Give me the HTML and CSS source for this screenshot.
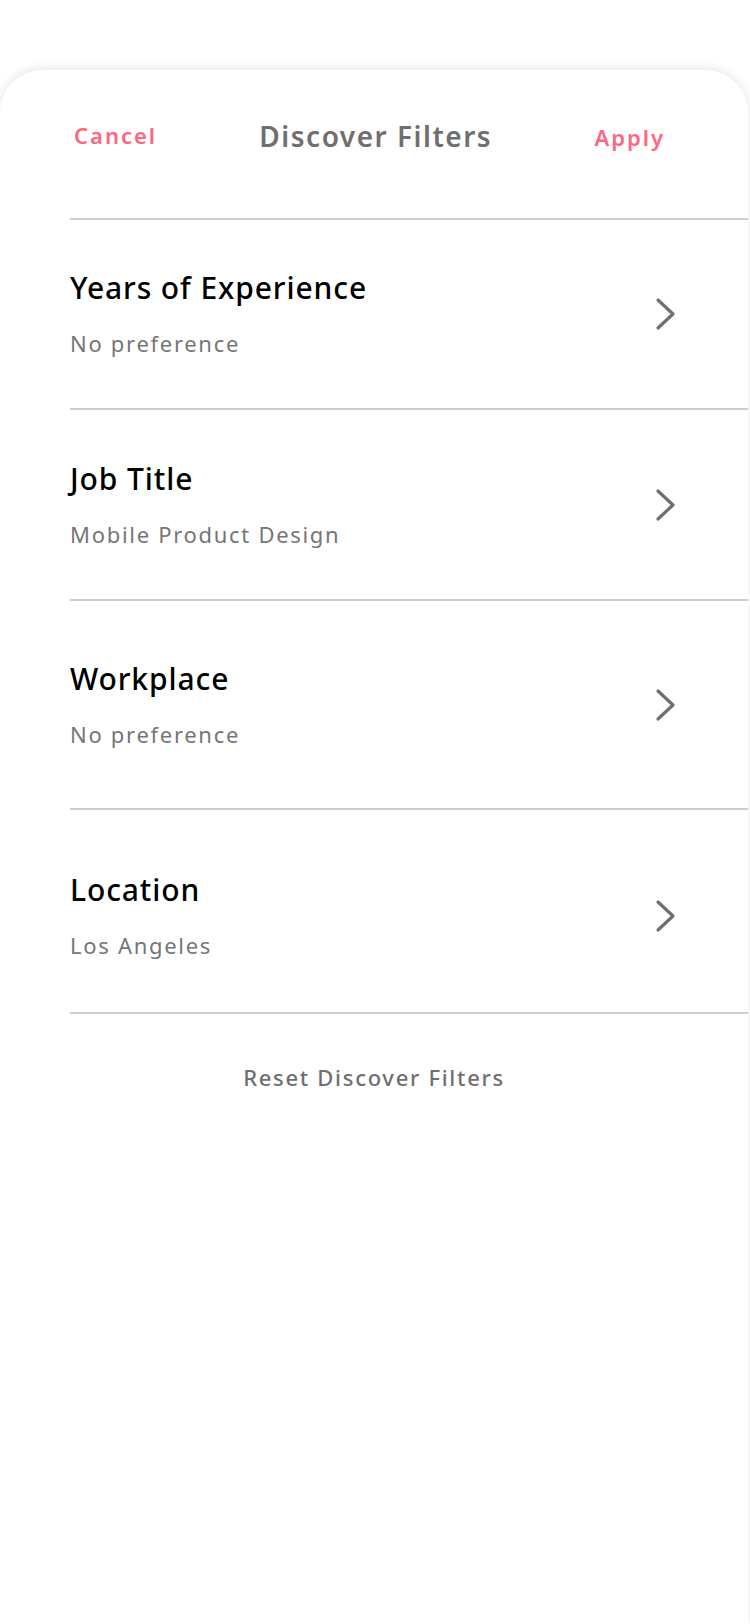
FILE: index.html
```html
<!DOCTYPE html>
<html lang="en">
<head>
    <meta charset="UTF-8">
    <meta name="viewport" content="width=device-width, initial-scale=1.0">
    <title>Discover Filters</title>
    <link rel="stylesheet" href="styles.css">
</head>
<body>
    <div class="sheet">
        <header class="sheet-header">
            <button class="link-btn cancel">Cancel</button>
            <h2 class="sheet-title">Discover Filters</h2>
            <button class="link-btn apply">Apply</button>
        </header>

        <ul class="filter-list">
            <li class="filter-row row-1">
                <div class="filter-text">
                    <h3>Years of Experience</h3>
                    <p>No preference</p>
                </div>
                <svg class="chevron" width="22" height="34" viewBox="0 0 22 34"><path d="M3 3 L18 17 L3 31"/></svg>
            </li>
            <li class="filter-row row-2">
                <div class="filter-text">
                    <h3>Job Title</h3>
                    <p>Mobile Product Design</p>
                </div>
                <svg class="chevron" width="22" height="34" viewBox="0 0 22 34"><path d="M3 3 L18 17 L3 31"/></svg>
            </li>
            <li class="filter-row row-3">
                <div class="filter-text">
                    <h3>Workplace</h3>
                    <p>No preference</p>
                </div>
                <svg class="chevron" width="22" height="34" viewBox="0 0 22 34"><path d="M3 3 L18 17 L3 31"/></svg>
            </li>
            <li class="filter-row row-4">
                <div class="filter-text">
                    <h3>Location</h3>
                    <p>Los Angeles</p>
                </div>
                <svg class="chevron" width="22" height="34" viewBox="0 0 22 34"><path d="M3 3 L18 17 L3 31"/></svg>
            </li>
        </ul>

        <button class="reset-btn">Reset Discover Filters</button>
    </div>
</body>
</html>
```

FILE: styles.css
```css
:root {
    --accent: #ff6680;
    --title-grey: #6f6f6f;
    --sub-grey: #767676;
    --divider: #cdcdcd;
}

* {
    box-sizing: border-box;
    margin: 0;
    padding: 0;
}

body {
    font-family: "Noto Sans", "Open Sans", sans-serif;
    background: #fff;
    color: #000;
    padding-top: 70px;
}

.sheet {
    background: #fff;
    border-radius: 42px 42px 0 0;
    box-shadow: 0 -2px 10px rgba(0, 0, 0, 0.1);
    min-height: 1554px;
    margin-right: 2px;
}

.sheet-header {
    display: flex;
    align-items: center;
    justify-content: space-between;
    height: 150px;
    margin-left: 70px;
    padding: 0 83px 16px 4px;
    border-bottom: 2px solid var(--divider);
}

.link-btn {
    background: none;
    border: none;
    font-family: inherit;
    font-size: 22px;
    font-weight: 600;
    letter-spacing: 2px;
    color: var(--accent);
    cursor: pointer;
}

.cancel {
    margin-top: -3px;
}

.apply {
    margin-top: 2px;
}

.sheet-title {
    font-size: 28px;
    font-weight: 600;
    letter-spacing: 1.5px;
    color: var(--title-grey);
}

.filter-list {
    list-style: none;
    margin-left: 70px;
}

.filter-row {
    display: flex;
    align-items: center;
    justify-content: space-between;
    padding-right: 71px;
    border-bottom: 2px solid var(--divider);
}

.row-1 { height: 190px; }
.row-2 { height: 191px; }
.row-3 { height: 209px; }
.row-4 { height: 204px; padding-top: 9px; }

.filter-text h3 {
    font-size: 30px;
    font-weight: 500;
    letter-spacing: 0.9px;
    line-height: 36px;
    margin-bottom: 22px;
}

.filter-text p {
    font-size: 22px;
    line-height: 30px;
    letter-spacing: 1.7px;
    color: var(--sub-grey);
}

.chevron {
    fill: none;
    stroke: var(--title-grey);
    stroke-width: 3.2;
    stroke-linecap: round;
    stroke-linejoin: round;
}

.reset-btn {
    display: block;
    margin: 48px auto 0;
    background: none;
    border: none;
    font-family: inherit;
    font-size: 22px;
    font-weight: 500;
    letter-spacing: 1.7px;
    color: var(--title-grey);
    cursor: pointer;
}
```
